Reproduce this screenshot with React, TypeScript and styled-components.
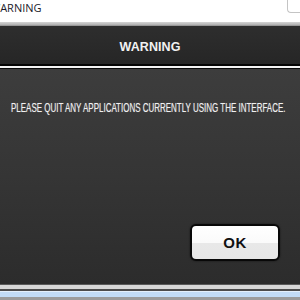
import styled, { createGlobalStyle } from "styled-components";

const GlobalStyle = createGlobalStyle`
  html, body {
    margin: 0;
    padding: 0;
    background: #ffffff;
  }
  body {
    width: 300px;
    height: 300px;
    overflow: hidden;
  }
`;

const Screen = styled.div`
  width: 300px;
  height: 300px;
  display: flex;
  flex-direction: column;
  overflow: hidden;
`;

const TitleStrip = styled.div`
  height: 22px;
  flex: none;
  display: flex;
  justify-content: space-between;
  align-items: flex-start;
  background: #ffffff;
`;

const WindowTitle = styled.span`
  margin: 1px 0 0 -10px;
  font-family: "Open Sans", "Liberation Sans", sans-serif;
  font-size: 11px;
  line-height: 14px;
  color: #1a1a2a;
`;

const CornerBox = styled.div`
  width: 12px;
  height: 12px;
  border: 1px solid #c4c4c4;
  border-top: none;
  border-right: none;
  border-bottom-left-radius: 4px;
`;

const ChromeBand = styled.div`
  height: 4px;
  flex: none;
  background: linear-gradient(#d4d4d4, #b8b8b8 60%, #8a8a8a);
`;

const Header = styled.div`
  height: 38px;
  flex: none;
  display: flex;
  align-items: center;
  justify-content: center;
  background: linear-gradient(#2e2e2e, #262626);
`;

const HeaderTitle = styled.h1`
  margin: 3px 0 0;
  font-family: "Liberation Sans", Arial, sans-serif;
  font-weight: bold;
  font-size: 12.5px;
  color: #f2f2f2;
  letter-spacing: 0.1px;
`;

const Divider = styled.div`
  height: 2px;
  flex: none;
  background: #f4f4f4;
  border-top: 2px solid #050505;
  border-bottom: 1px solid #0a0a0a;
`;

const Body = styled.div`
  flex: 1;
  min-width: 0;
  display: flex;
  flex-direction: column;
  align-items: stretch;
  padding: 33px 20px 0 11px;
  background: linear-gradient(#3d3d3d, #353535 50%, #2c2c2c);
`;

/* the original face is a condensed sans, so squeeze Liberation Sans */
const Message = styled.p`
  margin: 0;
  width: 420px;
  font-family: "Liberation Sans", Arial, sans-serif;
  font-size: 12px;
  line-height: 13px;
  color: #f0f0f0;
  white-space: nowrap;
  transform: scaleX(0.665);
  transform-origin: left center;
  text-shadow: 0 0 1px rgba(255, 255, 255, 0.4);
`;

const ButtonRow = styled.div`
  display: flex;
  justify-content: flex-end;
  margin-top: 109px;
`;

const OkButton = styled.button`
  width: 90px;
  height: 37px;
  padding: 0;
  box-sizing: border-box;
  border: 2px solid #080808;
  border-radius: 6px;
  background: linear-gradient(#ffffff 0%, #fafafa 50%, #e8e8e8 52%, #e6e6e6 100%);
  box-shadow: 0 0 2px rgba(0, 0, 0, 0.6);
  font-family: "Liberation Sans", Arial, sans-serif;
  font-weight: bold;
  font-size: 15px;
  color: #111111;
  letter-spacing: 0.5px;
`;

const Strip = styled.div<{ $h: number; $bg: string }>`
  height: ${(p) => p.$h}px;
  flex: none;
  background: ${(p) => p.$bg};
`;

export default function App() {
  return (
    <>
      <GlobalStyle />
      <Screen>
        <TitleStrip>
          <WindowTitle>WARNING</WindowTitle>
          <CornerBox />
        </TitleStrip>
        <ChromeBand />
        <Header>
          <HeaderTitle>WARNING</HeaderTitle>
        </Header>
        <Divider />
        <Body>
          <Message>
            PLEASE QUIT ANY APPLICATIONS CURRENTLY USING THE INTERFACE.
          </Message>
          <ButtonRow>
            <OkButton>OK</OkButton>
          </ButtonRow>
        </Body>
        <Strip $h={1} $bg="#5a5a5a" />
        <Strip $h={4} $bg="#d8d8d8" />
        <Strip $h={2} $bg="#4c4c4c" />
        <Strip $h={1} $bg="#e4f0fc" />
        <Strip $h={5} $bg="#c2dcf6" />
        <Strip $h={3} $bg="#9c9c9c" />
      </Screen>
    </>
  );
}
